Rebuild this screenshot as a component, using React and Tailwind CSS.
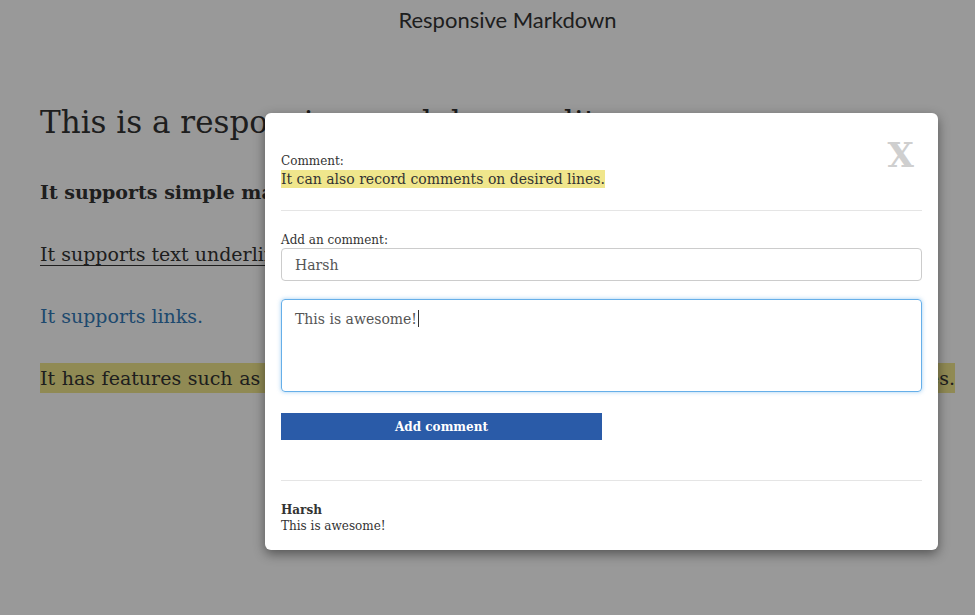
export default function App() {
  const serif = { fontFamily: '"DejaVu Serif", serif' }

  return (
    <div className="relative h-[615px] w-[975px] overflow-hidden bg-white text-[#333]" style={serif}>
      <header className="pl-10 pt-[3px] text-center text-[22px] text-[#333]" style={{ fontFamily: 'Lato, sans-serif' }}>
        Responsive Markdown
      </header>

      <main className="px-10 pt-[68px] whitespace-nowrap">
        <h1 className="text-[31px] leading-[36px]">This is a responsive markdown editor.</h1>
        <p className="mt-[37px] text-[19px] font-bold leading-[30px]">It supports simple markdown such as bold text.</p>
        <p className="mt-[32px] text-[19px] leading-[30px] underline underline-offset-4">It supports text underline and other formats.</p>
        <p className="mt-[32px] text-[19px] leading-[30px] text-[#337ab7]">It supports links.</p>
        <p className="mt-[32px] text-[19px] leading-[30px]">
          <span className="inline-block w-[915px] bg-[#f0e68c] [text-align-last:justify]">
            It has features such as highlighting important text and adding comments on the desired lines.
          </span>
        </p>
      </main>

      <div className="absolute inset-0 bg-black/40" />

      <div className="absolute left-[265px] top-[113px] flex h-[437px] w-[673px] flex-col rounded-md bg-white px-4 shadow-[0_4px_12px_rgba(0,0,0,0.45)]">
        <div className="relative pt-[41px]">
          <button className="absolute right-[8px] top-[25px] text-[34px] font-bold leading-none text-[#cfcfcf]">X</button>
          <div className="text-[12px] leading-[15px]">Comment:</div>
          <div className="mt-[1px] text-[14px] leading-[19px]">
            <span className="bg-[#f0e68c] py-[1px]">It can also record comments on desired lines.</span>
          </div>
        </div>

        <div className="mt-[21px] border-t border-[#e5e5e5]" />

        <label className="mt-[22px] text-[12px] leading-[15px]">Add an comment:</label>
        <input
          className="h-[33px] w-full rounded border border-[#ccc] px-[13px] text-[14px] text-[#555] outline-none"
          style={serif}
          defaultValue="Harsh"
        />
        <div className="mt-[18px] h-[93px] w-full rounded border border-[#66afe9] px-[13px] py-[7px] text-[14px] text-[#555] shadow-[0_0_4px_rgba(102,175,233,0.6)]">
          This is awesome!<span className="ml-[1px] inline-block h-[17px] w-px translate-y-[3px] bg-[#333]" />
        </div>

        <button className="mt-[21px] h-[27px] w-[321px] bg-[#2a5ba8] text-[12px] font-bold text-white" style={serif}>
          Add comment
        </button>

        <div className="mt-[40px] border-t border-[#e5e5e5]" />

        <div className="mt-[21px] text-[12px] font-bold leading-[16px]">Harsh</div>
        <div className="text-[12px] leading-[16px]">This is awesome!</div>
      </div>
    </div>
  )
}
